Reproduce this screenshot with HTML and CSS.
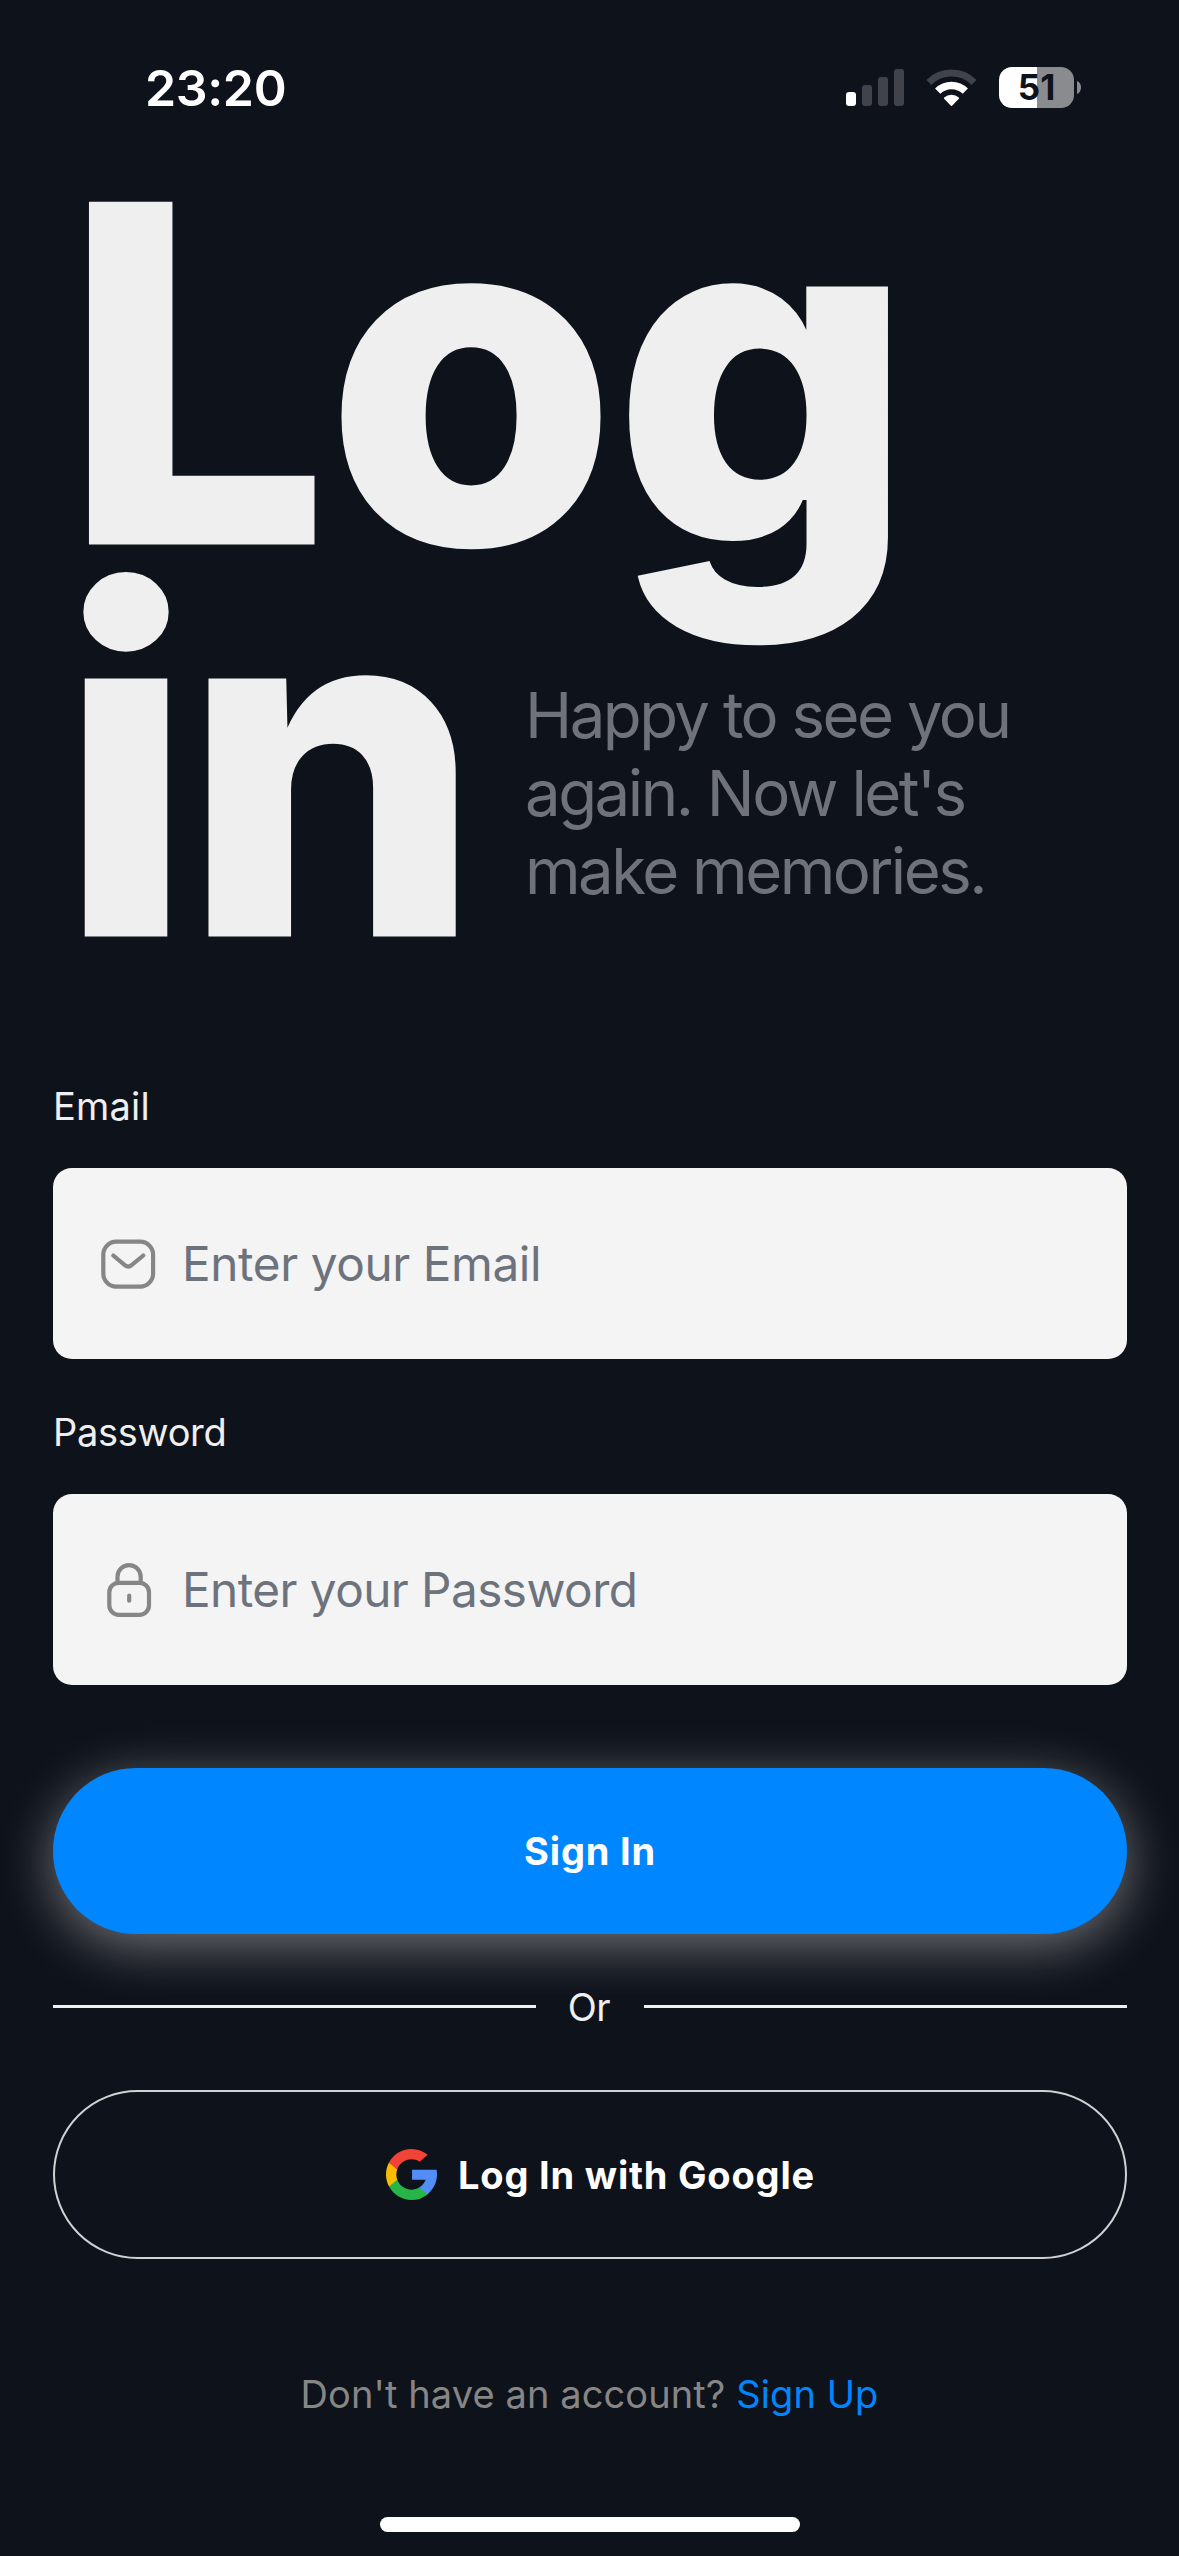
FILE: index.html
```html
<!DOCTYPE html>
<html lang="en">
<head>
<meta charset="utf-8">
<title>Log in</title>
<link rel="stylesheet" href="styles.css">
</head>
<body>
<div class="screen">
  <div class="status">
    <span class="time">23:20</span>
    <div class="indicators">
      <svg class="signal" width="58" height="37" viewBox="0 0 58 37"><rect x="0" y="23" width="10" height="14" rx="3" fill="#fff"/><rect x="16" y="16" width="10" height="21" rx="3" fill="#41434b"/><rect x="32" y="8" width="10" height="29" rx="3" fill="#41434b"/><rect x="48" y="0" width="10" height="37" rx="3" fill="#41434b"/></svg>
      <svg class="wifi" width="51" height="38" viewBox="0 0 51 38"><g fill="none"><path d="M2.900 13.400a32 32 0 0 1 45.200 0" stroke="#41434b" stroke-width="7"/><path d="M11.700 22.200a19.500 19.500 0 0 1 27.600 0" stroke="#fff" stroke-width="7.400"/></g><path d="M25.500 36.200L18.700 29.100a10 10 0 0 1 13.600 0Z" fill="#fff" stroke="#fff" stroke-width="1.600" stroke-linejoin="round"/></svg>
      <div class="battery">
        <div class="cell"><span class="level">51</span></div>
        <svg width="4" height="13" viewBox="0 0 4 13"><path d="M0 0c2.600 1 4 3.600 4 6.500S2.600 12 0 13Z" fill="#8a8b8e"/></svg>
      </div>
    </div>
  </div>

  <header class="hero">
    <div class="title">Log</div>
    <div class="second">
      <div class="title title-in">in</div>
      <p class="tagline">Happy to see you<br>again. Now let's<br>make memories.</p>
    </div>
  </header>

  <div class="field">
    <span class="label">Email</span>
    <div class="input">
      <svg width="60" height="60" viewBox="0 0 60 60" fill="none" stroke="#868686" stroke-width="4.200" stroke-linecap="round" stroke-linejoin="round"><rect x="5.300" y="7.600" width="49.800" height="45" rx="13"/><path d="M15.300 21.500L26.800 31.200Q30.200 33.900 33.600 31.200L45.300 21.500"/></svg>
      <span class="placeholder">Enter your Email</span>
    </div>
  </div>
  <div class="field password">
    <span class="label">Password</span>
    <div class="input">
      <svg width="60" height="60" viewBox="0 0 60 60" fill="none" stroke="#868686" stroke-width="4.200" stroke-linecap="round"><rect x="11.300" y="22.800" width="39.700" height="32" rx="9.500"/><path d="M19.500 22.200V16.800a11.600 11.600 0 0 1 23.200 0V22.200M31.200 35.700v5"/></svg>
      <span class="placeholder">Enter your Password</span>
    </div>
  </div>

  <div class="button primary">Sign In</div>
  <div class="divider"><span class="or">Or</span></div>
  <div class="button google">
    <svg width="51" height="51" viewBox="0 0 512 512"><path fill="#FBBB00" d="M113.470,309.408L95.648,375.940l-65.139,1.378C11.042,341.211,0,299.900,0,256c0-42.451,10.324-82.483,28.624-117.732h0.014l57.992,10.632l25.404,57.644c-5.317,15.501-8.215,32.141-8.215,49.456C103.821,274.792,107.225,292.797,113.470,309.408z"/><path fill="#518EF8" d="M507.527,208.176C510.467,223.662,512,239.655,512,256c0,18.328-1.927,36.206-5.598,53.451c-12.462,58.683-45.025,109.925-90.134,146.187l-0.014-0.014l-73.044-3.727l-10.338-64.535c29.932-17.554,53.324-45.025,65.646-77.911h-136.890V208.176h138.887L507.527,208.176z"/><path fill="#28B446" d="M416.253,455.624l0.014,0.014C372.396,490.901,316.666,512,256,512c-97.491,0-182.252-54.491-225.491-134.681l82.961-67.910c21.619,57.698,77.278,98.771,142.530,98.771c28.047,0,54.323-7.582,76.870-20.818L416.253,455.624z"/><path fill="#F14336" d="M419.404,58.936l-82.933,67.896c-23.335-14.586-50.919-23.012-80.471-23.012c-66.729,0-123.429,42.957-143.965,102.724l-83.397-68.276h-0.014C71.230,56.123,157.060,0,256,0C318.115,0,375.068,22.126,419.404,58.936z"/></svg>
    <span>Log In with Google</span>
  </div>
  <p class="signup">Don't have an account? <a class="link">Sign Up</a></p>
  <div class="home"></div>
</div>
</body>
</html>
```
FILE: styles.css
```css
* { box-sizing: border-box; margin: 0; padding: 0; }
body { background: #0e121a; }
.screen {
  width: 1179px; height: 2556px; overflow: hidden;
  display: flex; flex-direction: column;
  background: #0e121a; color: #efefef;
  font-family: Inter, "Liberation Sans", sans-serif;
}
.screen svg { display: block; flex: none; }

.status {
  height: 175px; flex: none; padding: 0 98px 0 145px;
  display: flex; align-items: center; justify-content: space-between;
}
.time { color: #fff; font-size: 50px; line-height: 60px; font-weight: 600; letter-spacing: -0.350px; }
.indicators { display: flex; align-items: center; gap: 22px; }
.battery { display: flex; align-items: center; gap: 3px; }
.cell {
  width: 75px; height: 41px; border-radius: 13px;
  display: flex; align-items: center; justify-content: center;
  background: linear-gradient(90deg, #fff 38px, #8a8b8e 38px);
}
.level { color: #0e121a; font-size: 35px; line-height: 41px; font-weight: 700; }

.hero { height: 787px; flex: none; padding: 3px 0 0 64px; }
.title {
  font-size: 467px; line-height: 392px; font-weight: 800; letter-spacing: -1.500px;
  -webkit-text-stroke: 3px #efefef;
}
.second { display: flex; }
.title-in { width: 465px; flex: none; margin-left: -4px; letter-spacing: -8.500px; }
.tagline {
  padding-top: 106px; color: #6f727a; white-space: nowrap;
  font-size: 63.500px; line-height: 78px; letter-spacing: -2.500px;
}

.field { height: 326px; flex: none; padding: 121px 52px 0 53px; }
.password { margin-bottom: 154px; }
.label { display: block; height: 85px; font-size: 38px; line-height: 46px; letter-spacing: 0.200px; }
.password .label { letter-spacing: -0.300px; }
.input {
  height: 191px; border-radius: 19px; background: #f4f4f4;
  display: flex; align-items: center; padding: 0 45px; gap: 24px;
}
.placeholder { color: #6d737d; font-size: 47.700px; line-height: 60px; letter-spacing: -0.400px; }
.password .placeholder { letter-spacing: -0.550px; }

.button {
  flex: none; margin: 0 52px 0 53px;
  display: flex; align-items: center; justify-content: center;
  color: #fff; font-size: 38px; line-height: 46px; font-weight: 700; letter-spacing: 0.800px;
}
.primary {
  height: 166px; border-radius: 83px; background: #0086ff;
  box-shadow: 0 12px 54px rgba(255, 255, 255, 0.410);
}
.divider {
  height: 46px; flex: none; margin: 49px 52px 0 53px;
  display: flex; align-items: center; font-size: 38px; line-height: 46px;
}
.divider::before, .divider::after { content: ""; flex: 1; height: 3px; background: #efefef; }
.or { width: 108px; padding: 2px 2px 0 0; text-align: center; letter-spacing: -0.500px; }
.google { height: 169px; margin-top: 61px; padding-left: 21px; border: 2px solid #d0d1d2; border-radius: 85px; gap: 21px; }
.signup { margin-top: 112px; text-align: center; color: #868686; font-size: 38px; line-height: 46px; letter-spacing: 0.100px; }
.link { color: #0086ff; }
.home { width: 420px; height: 15px; margin: auto auto 24px; border-radius: 8px; background: #fff; }
```
